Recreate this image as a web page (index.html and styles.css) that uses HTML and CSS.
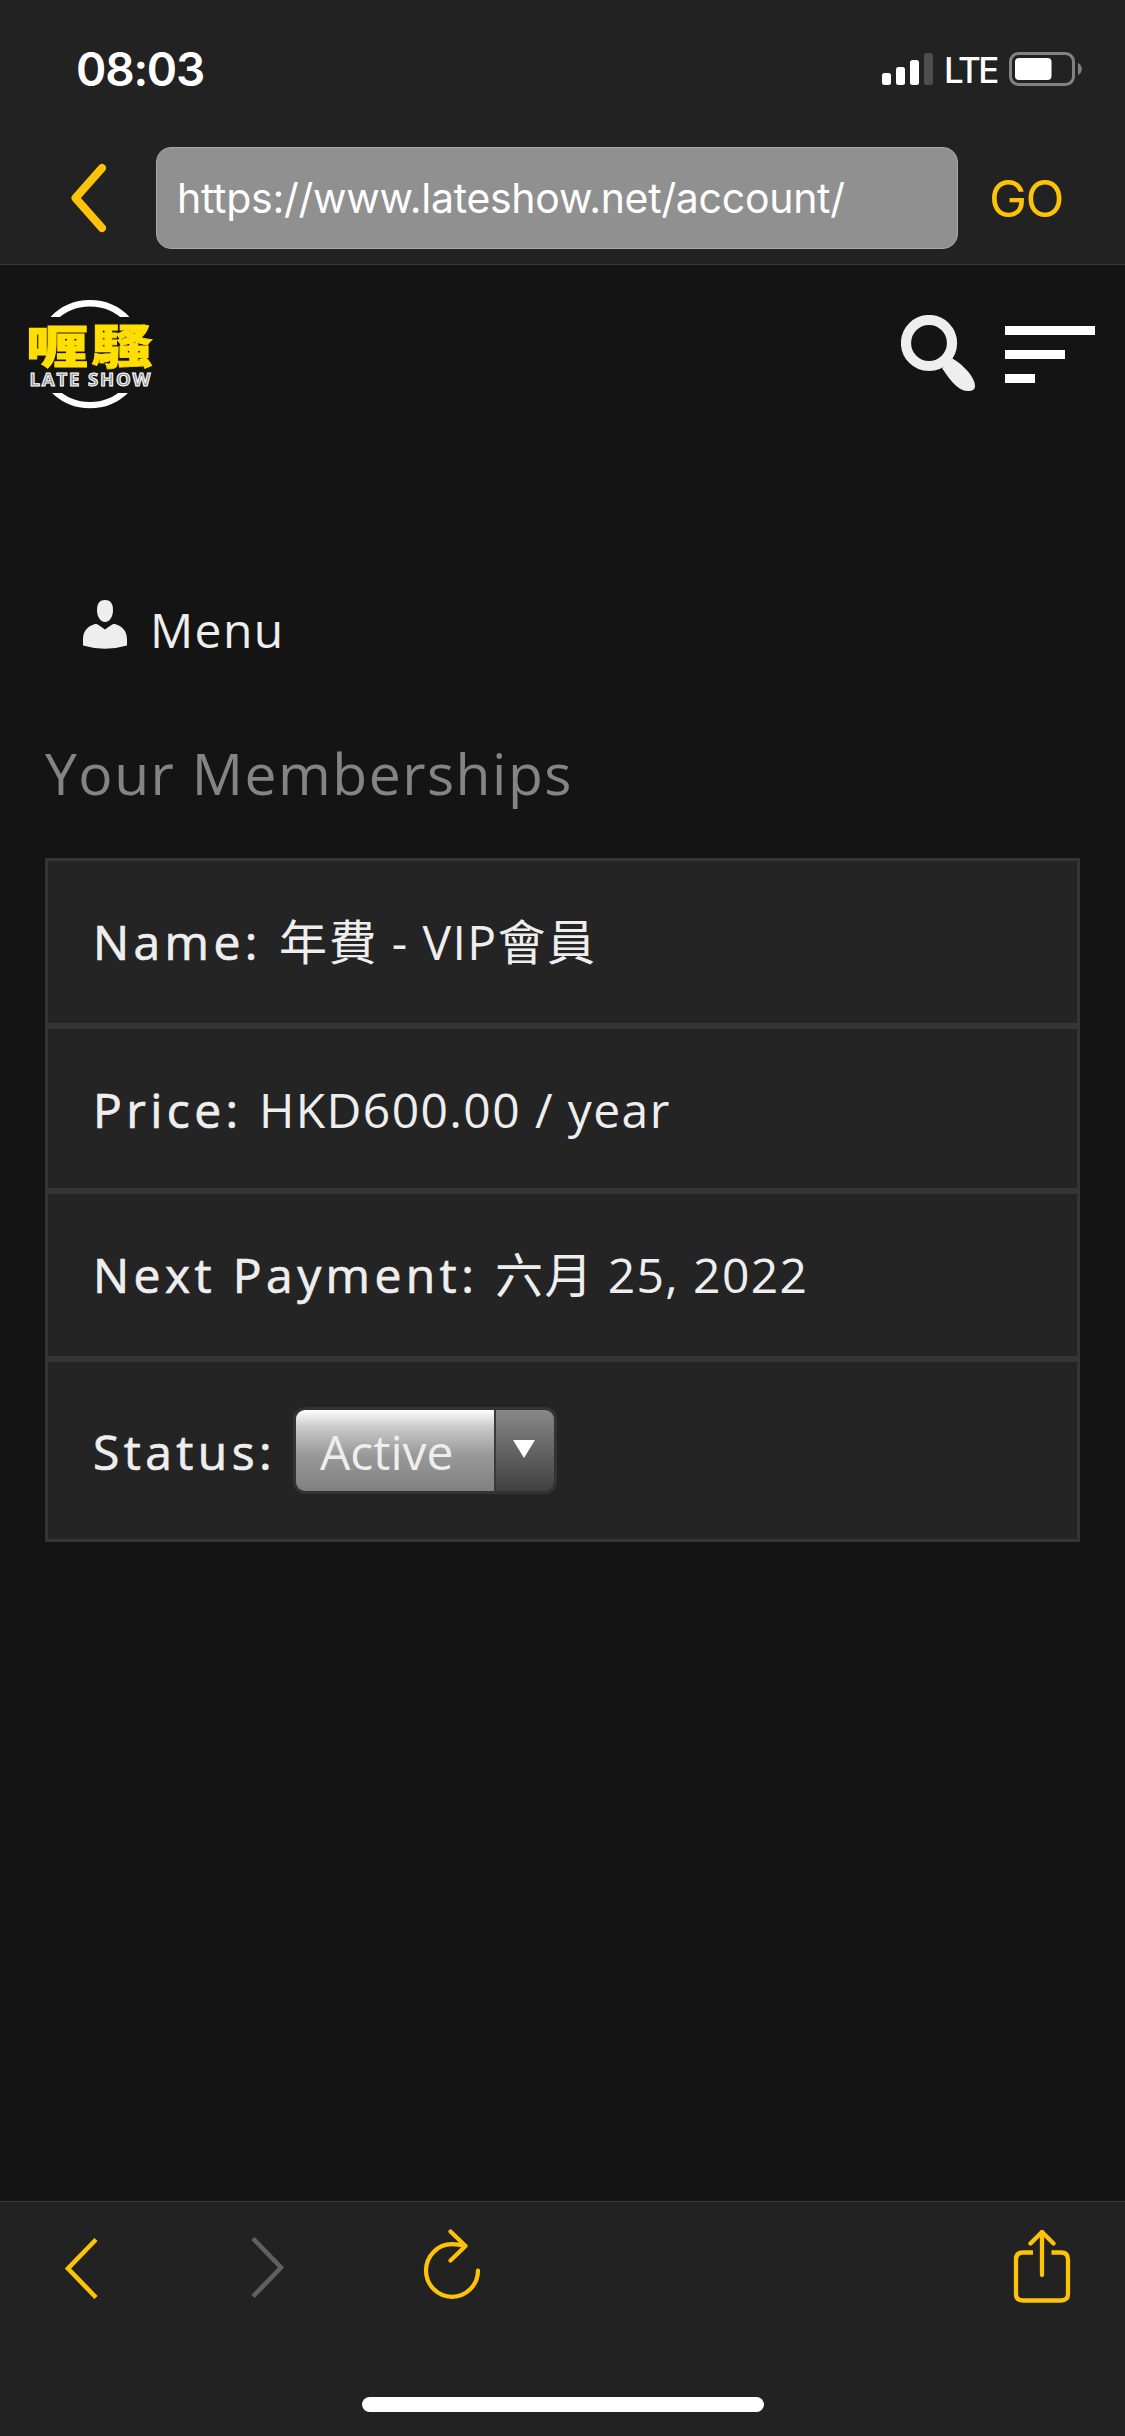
FILE: index.html
```html
<!DOCTYPE html>
<html lang="zh-Hant">
<head>
<meta charset="utf-8">
<title>Late Show – Account</title>
<link rel="stylesheet" href="styles.css">
</head>
<body>
<div class="screen">
  <header class="browser-top">
    <div class="status-bar">
      <span class="clock">08:03</span>
      <svg class="signal" width="51" height="32" viewBox="0 0 51 32" fill="#fff">
        <rect x="0" y="20" width="9" height="12" rx="2.5"/>
        <rect x="14" y="14" width="9" height="18" rx="2.5"/>
        <rect x="28" y="7" width="9" height="25" rx="2.5"/>
        <rect x="42" y="0" width="9" height="32" rx="2.5" fill="#4e4e4e"/>
      </svg>
      <span class="network">LTE</span>
      <svg class="battery" width="74" height="34" viewBox="0 0 74 34">
        <rect x="1.5" y="1.5" width="63" height="31" rx="8" fill="none" stroke="#828282" stroke-width="3"/>
        <rect x="6" y="6" width="36.500" height="22" rx="4" fill="#fff"/>
        <path d="M69 11c5 2 5 10 0 12z" fill="#828282"/>
      </svg>
    </div>
    <div class="address-bar">
      <svg class="back" width="36" height="70" viewBox="0 0 36 70" fill="none" stroke="#fcc309" stroke-width="8" stroke-linecap="round" stroke-linejoin="round"><path d="M32 5 5.500 35 32 65"/></svg>
      <div class="url"><span class="url-text">https://www.lateshow.net/account/</span></div>
      <span class="go">GO</span>
    </div>
  </header>

  <main class="page">
    <div class="site-header">
      <svg class="logo" width="126" height="112" viewBox="0 0 126 112">
        <g fill="none" stroke="#fff" stroke-width="6.400">
          <path d="M26 21A51.500 51.500 0 0 1 100 21"/>
          <path d="M27 92.500A51.500 51.500 0 0 0 99 92.500"/>
        </g>
        <rect x="18" y="19" width="90" height="76" fill="#141414"/>
        <text class="logo-zh" x="-1" y="64.500" textLength="62" lengthAdjust="spacingAndGlyphs">喱</text>
        <text class="logo-zh" x="64.500" y="64.500" textLength="61" lengthAdjust="spacingAndGlyphs">騷</text>
        <text class="logo-en" x="2.500" y="87.500" textLength="121">LATE SHOW</text>
      </svg>
      <svg class="search" width="76" height="78" viewBox="0 0 76 78">
        <circle cx="28" cy="28" r="23" fill="none" stroke="#eee" stroke-width="10.200"/>
        <path d="M41 53 51.500 43.500C64 51 74 63 74 71C74 75 71 76 67 76C59 76 51 69 41 53Z" fill="#eee"/>
      </svg>
      <div class="burger"><i class="bar"></i><i class="bar bar-mid"></i><i class="bar bar-short"></i></div>
    </div>

    <div class="account-menu">
      <svg class="person" width="44" height="49" viewBox="0 0 44 49" fill="#eee">
        <path d="M22 0C27 0 30 3 30 10C30 16 27 22 22 22C17 22 14 16 14 10C14 3 17 0 22 0Z"/>
        <path d="M12 24C15 24 17 26 22 29.500C27 26 29 24 32 24C39 26 44 31 44 39V45.500Q22 52 0 45.500V39C0 31 5 26 12 24Z"/>
      </svg>
      <span class="menu-text">Menu</span>
    </div>

    <h2 class="heading"><span class="heading-text">Your Memberships</span></h2>

    <div class="table">
      <div class="row row-name"><span class="label label-name">Name:</span><span class="value value-name">年費 - VIP會員</span></div>
      <div class="row row-price"><span class="label label-price">Price:</span><span class="value value-price">HKD600.00 / year</span></div>
      <div class="row row-next"><span class="label label-next">Next Payment:</span><span class="value value-next">六月 25, 2022</span></div>
      <div class="row row-status"><span class="label label-status">Status:</span>
        <div class="select">
          <span class="select-value">Active</span>
          <span class="select-arrow"><svg width="22" height="18" viewBox="0 0 22 18"><path d="M0 0H22L11 18Z" fill="#fff"/></svg></span>
        </div>
      </div>
    </div>
  </main>

  <footer class="toolbar">
    <div class="tools">
      <svg class="prev" width="36" height="64" viewBox="0 0 36 64" fill="none" stroke="#fcc309" stroke-width="4.600"><path d="M32 2.500 4 31.500 32 60.500"/></svg>
      <svg class="next" width="36" height="64" viewBox="0 0 36 64" fill="none" stroke="#606060" stroke-width="4.600"><path d="M4 1.500 32 30.500 4 59.500"/></svg>
      <svg class="reload" width="60" height="74" viewBox="0 0 60 74" fill="none" stroke="#fcc309" stroke-width="4.200" stroke-linecap="round" stroke-linejoin="round"><path d="M56 41.500A26 26.300 0 1 1 30 15.200Q37 15.200 43 17M28.500 2.500 43.500 17 28.500 31.500"/></svg>
      <svg class="share" width="58" height="74" viewBox="0 0 58 74" fill="none" stroke="#fcc309" stroke-width="4.300"><path d="M20 23.500H10Q3 23.500 3 30.500V65Q3 71.500 10 71.500H48Q55 71.500 55 65V30.500Q55 23.500 48 23.500H38.500"/><path d="M29 3V46M17.500 14.500 29 3 40.500 14.500" stroke-linecap="round" stroke-linejoin="round"/></svg>
    </div>
    <div class="home-indicator"></div>
  </footer>
</div>
</body>
</html>
```
FILE: styles.css
```css
* { box-sizing: border-box; }
body { margin: 0; background: #141414; }
svg { display: block; flex: none; }
.screen {
  width: 1125px;
  height: 2436px;
  display: flex;
  flex-direction: column;
  background: #141414;
  color: #eee;
  font-family: "Open Sans", "Noto Sans CJK TC", sans-serif;
  white-space: nowrap;
  overflow: hidden;
}

/* Status bar and address field */
.browser-top {
  height: 265px;
  flex: none;
  background: #222;
  border-bottom: 1px solid #3a3a3a;
  font-family: Inter, sans-serif;
}
.status-bar { height: 147px; display: flex; align-items: flex-start; padding: 52px 42px 0 76px; color: #fff; }
.clock { font-size: 46px; line-height: 34px; font-weight: 600; letter-spacing: -1.2px; margin-right: auto; }
.signal { margin: 1px 11px 0 0; }
.network { width: 65px; font-size: 35px; line-height: 37px; font-weight: 500; letter-spacing: -2.6px; }
.address-bar { height: 102px; display: flex; align-items: center; padding-left: 70px; }
.url {
  width: 802px;
  height: 102px;
  margin-left: 50px;
  padding-left: 20px;
  border: 1px solid #a8a8a8;
  border-radius: 15px;
  background: #909090;
  color: #fff;
  font-size: 41px;
  line-height: 101px;
  letter-spacing: -0.28px;
}
.go { margin-left: 31px; color: #fcc309; font-size: 51px; letter-spacing: -1.6px; line-height: 60px; padding-top: 1px; }

/* Site content */
.page { flex: 1; display: flex; flex-direction: column; }
.site-header { height: 178px; display: flex; align-items: flex-start; padding: 33px 30px 0 27px; }
.logo-zh { font: 900 46px "Noto Sans CJK TC", sans-serif; fill: #ffde00; stroke: #ffde00; stroke-width: 0.8px; }
.logo-en { font: 700 18.5px "Open Sans", sans-serif; fill: #888; stroke: #fff; stroke-width: 1.1px; }
.search { margin: 17px 28px 0 auto; }
.burger { display: flex; flex-direction: column; gap: 15px; width: 90px; margin-top: 28px; }
.bar { height: 9px; background: #fff; }
.bar-mid { width: 60px; }
.bar-short { width: 30px; }
.account-menu { height: 90px; margin-top: 157px; padding-left: 83px; display: flex; gap: 23px; font-size: 48px; line-height: 60px; letter-spacing: 1.4px; }
.heading { margin: 43px 0 0 45px; height: 125px; font-size: 57px; font-weight: 400; line-height: 80px; letter-spacing: 1.5px; color: #848484; }
.table {
  width: 1035px;
  margin-left: 45px;
  border: 3px solid #353535;
  background: #353535;
  display: grid;
  grid-template-rows: 162px 159px 162px 177px;
  row-gap: 6px;
  font-size: 48px;
}
.row { display: flex; align-items: center; padding-left: 45px; background: #242424; line-height: 64px; }
.row-price { padding-top: 2px; }
.label { letter-spacing: 4.4px; -webkit-text-stroke: 0.7px #eee; }
.value { letter-spacing: 1.4px; }
.label-name { width: 186px; }
.label-price { width: 166px; }
.label-next { width: 402px; }
.label-status { width: 200px; padding-top: 2px; }
.select {
  width: 264px;
  height: 87px;
  display: flex;
  border: 3px solid #333;
  border-radius: 12px;
  overflow: hidden;
}
.select-value {
  width: 198px;
  padding: 10px 0 0 24px;
  background: linear-gradient(#fff 0%, #ccc 20%, #999 55%, #808080 100%);
}
.select-arrow {
  flex: 1;
  padding: 30px 0 0 17px;
  border-left: 2px solid #3a3a3a;
  background: linear-gradient(#888, #404040);
}

/* Bottom toolbar */
.toolbar { flex: none; height: 235px; background: #222; border-top: 1px solid #3a3a3a; }
.tools { height: 195px; display: flex; align-items: flex-start; padding: 27px 54px 0 64px; }
.prev { margin-top: 8px; }
.next { margin: 8px 0 0 149px; }
.reload { margin-left: 137px; }
.share { margin-left: auto; }
.home-indicator { width: 402px; height: 15px; margin: 0 auto; border-radius: 8px; background: #fff; }
```
